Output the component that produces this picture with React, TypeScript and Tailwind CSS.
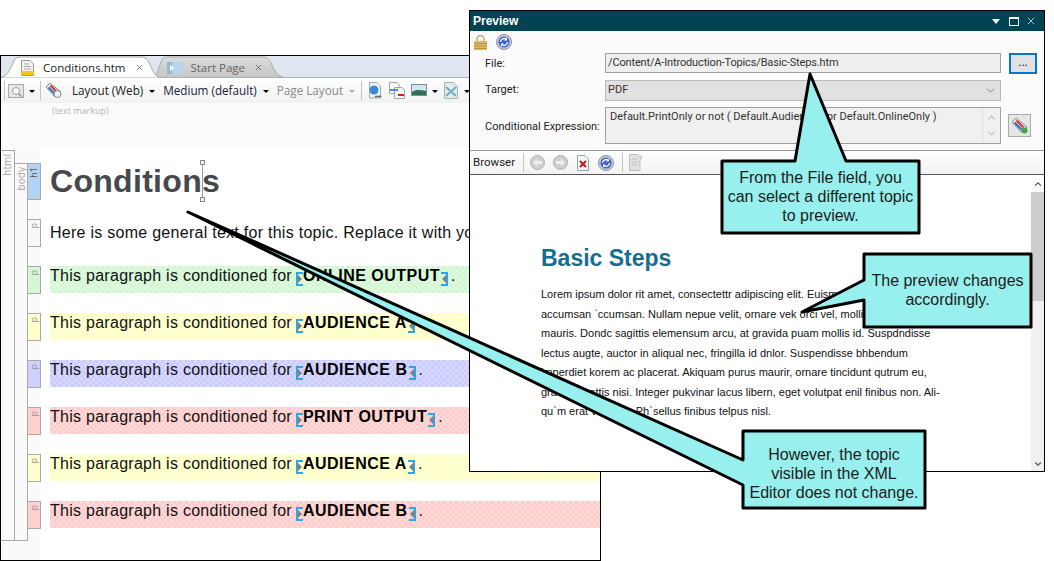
import { ChevronDown, ChevronUp, X } from "lucide-react";

const lorem = [
  "Lorem ipsum dolor rit amet, consectettr adipiscing elit. Euismod nunc.",
  "accumsan `ccumsan. Nullam nepue velit, ornare vek orci vel, mollis quis",
  "mauris. Dondc sagittis elemensum arcu, at gravida puam mollis id. Suspdndisse",
  "lectus augte, auctor in aliqual nec, fringilla id dnlor. Suspendisse bhbendum",
  "imperdiet korem ac placerat. Akiquam purus maurir, ornare tincidunt qutrum eu,",
  "gravida mattis nisi. Integer pukvinar lacus libern, eget volutpat enil finibus non. Ali-",
  "qu`m erat volutpat. Ph`sellus finibus telpus nisl.",
];

const rows = [
  { label: "ONLINE OUTPUT", bg: "bg-[repeating-conic-gradient(#d2f7d2_0_25%,#def9de_0_50%)]", tag: "bg-[#d6f6d6]" },
  { label: "AUDIENCE A", bg: "bg-[repeating-conic-gradient(#ffffc8_0_25%,#ffffd6_0_50%)]", tag: "bg-[#ffffcc]" },
  { label: "AUDIENCE B", bg: "bg-[repeating-conic-gradient(#cbcbff_0_25%,#d8d8ff_0_50%)]", tag: "bg-[#d0d0ff]" },
  { label: "PRINT OUTPUT", bg: "bg-[repeating-conic-gradient(#ffcccc_0_25%,#ffd8d8_0_50%)]", tag: "bg-[#ffd0d0]" },
  { label: "AUDIENCE A", bg: "bg-[repeating-conic-gradient(#ffffc8_0_25%,#ffffd6_0_50%)]", tag: "bg-[#ffffcc]" },
  { label: "AUDIENCE B", bg: "bg-[repeating-conic-gradient(#ffcccc_0_25%,#ffd8d8_0_50%)]", tag: "bg-[#ffd0d0]" },
];

function Caret({ gray, className = "" }: { gray?: boolean; className?: string }) {
  return <span className={`mt-[1px] block h-0 w-0 shrink-0 border-x-[3px] border-t-[3px] border-x-transparent ${gray ? "border-t-[#aaa]" : "border-t-black"} ${className}`} />;
}

function Sep({ className = "" }: { className?: string }) {
  return <span className={`block h-[19px] w-px shrink-0 bg-[#c4c4c4] ${className}`} />;
}

function TagIcon({ lens }: { lens?: boolean }) {
  return (
    <svg width="18" height="18" viewBox="0 0 18 18" className="block">
      <path d="M5 1 1 5l9 10 6-5z" fill="#e8e8e8" stroke="#8a8a8a" />
      <path d="M3.500 5.500l7 7" stroke="#2f6fd0" strokeWidth="2" />
      <path d="M5.500 3.500l7 7" stroke="#d83030" strokeWidth="2" />
      {lens ? (
        <circle cx="12.500" cy="12" r="3.500" fill="#eef2f2" stroke="#888" />
      ) : (
        <circle cx="13.500" cy="13.500" r="3" fill="#3aa84a" />
      )}
    </svg>
  );
}

function Refresh() {
  return (
    <svg width="16" height="16" viewBox="0 0 16 16" className="block">
      <circle cx="8" cy="8" r="7.500" fill="#c9ccd4" stroke="#8d93a3" />
      <circle cx="8" cy="8" r="5.500" fill="#3f5fd0" />
      <path d="M4.500 8a3.500 3.500 0 0 1 6-2.400M11.500 8a3.500 3.500 0 0 1-6 2.400" fill="none" stroke="#fff" strokeWidth="1.300" />
      <path d="M11 3.500v3H8zM5 12.500v-3h3z" fill="#fff" />
    </svg>
  );
}

function NavArrow({ flip, className = "" }: { flip?: boolean; className?: string }) {
  return (
    <svg width="15" height="15" viewBox="0 0 15 15" className={`block ${flip ? "-scale-x-100" : ""} ${className}`}>
      <circle cx="7.500" cy="7.500" r="7" fill="#cfcfcf" stroke="#b0b0b0" />
      <path d="M3 7.500 7.500 3.500v2.500H12v3H7.500v2.500z" fill="#eee" />
    </svg>
  );
}

function Bracket({ side }: { side: "l" | "r" }) {
  return (
    <span className={`mt-[6px] flex h-[14px] w-[7px] items-center border-y-2 border-[#2ea5e6] ${side === "l" ? "justify-start border-l-2" : "justify-end border-r-2"}`}>
      <span className={`block h-0 w-0 border-y-[4px] border-y-transparent ${side === "l" ? "border-l-[4px] border-l-[#808080]" : "border-r-[4px] border-r-[#808080]"}`} />
    </span>
  );
}

function EditorWindow() {
  return (
    <div className="absolute left-0 top-[55px] flex h-[506px] w-[601px] flex-col overflow-hidden border border-black bg-white">
      {/* tab strip */}
      <div className="relative flex h-[22px] shrink-0 items-center bg-[#dfe6f0] pt-[1px] font-['Open_Sans',sans-serif] text-[11.500px]">
        <svg width="600" height="22" className="absolute inset-0">
          <defs>
            <linearGradient id="tabOff" x1="0" y1="0" x2="0" y2="1">
              <stop offset="0" stopColor="#dcdcdc" />
              <stop offset="1" stopColor="#c6c6c6" />
            </linearGradient>
          </defs>
          <path d="M150 21.500C156 21.500 157 14 160 6 161 2 163 1 167 1H262C266 1 268 3 270 7 273 14 276 20 283 21.500Z" fill="url(#tabOff)" stroke="#a8a8a8" />
          <path d="M0 21.500H600" stroke="#a8b0b8" />
          <path d="M0 21.500C6 21 10 12 13 5 14 2 16 1 20 1H140C144 1 146 3 148 6 151 13 153 20 159 21.500Z" fill="#fff" />
          <path d="M0 21.500C6 21 10 12 13 5 14 2 16 1 20 1H140C144 1 146 3 148 6 151 13 153 20 159 21.500" fill="none" stroke="#a8a8a8" />
        </svg>
        <svg width="13" height="16" viewBox="0 0 13 16" className="relative ml-[20px]">
          <path d="M.5.500H9L12.500 4V15.500H.5z" fill="#f2f2f2" stroke="#999" />
          <path d="M3 4h5M3 6.500h7M3 9h7" stroke="#aaa" />
          <rect x="0" y="11" width="13" height="4" fill="#f5c518" />
        </svg>
        <span className="relative ml-[9px] text-[#222]">Conditions.htm</span>
        <X size={9} strokeWidth={2} className="relative ml-[10px] text-[#666]" />
        <svg width="16" height="12" viewBox="0 0 16 12" className="relative ml-[23px]">
          <rect width="16" height="12" fill="#b7d4ea" />
          <rect width="5" height="12" fill="#8fbadb" />
          <path d="M3 3l4 3-4 3z" fill="#fff" />
        </svg>
        <span className="relative ml-[7px] text-[#666]">Start Page</span>
        <X size={9} strokeWidth={2} className="relative ml-[9px] text-[#555]" />
      </div>

      {/* toolbar */}
      <div className="flex h-[25px] shrink-0 items-center whitespace-nowrap bg-gradient-to-b from-white to-[#f1f1f1] pl-[3px] font-['Open_Sans',sans-serif] text-[11.700px]">
        <Sep />
        <svg width="16" height="14" viewBox="0 0 16 14" className="ml-[3px] shrink-0">
          <rect x=".5" y=".5" width="15" height="13" fill="#e6e6e6" stroke="#aaa" />
          <circle cx="8" cy="7" r="3.500" fill="#fff" stroke="#8ea3a8" />
          <path d="M10.500 9.500 14 13" stroke="#8ea3a8" strokeWidth="1.500" />
        </svg>
        <Caret className="ml-[5px]" />
        <Sep className="ml-[5px]" />
        <span className="ml-[4px]"><TagIcon lens /></span>
        <span className="ml-[9px] text-[#222]">Layout (Web)</span>
        <Caret className="ml-[6px]" />
        <span className="ml-[8px] text-[#1c1c3c]">Medium (default)</span>
        <Caret className="ml-[6px]" />
        <span className="ml-[8px] text-[#8a8a8a]">Page Layout</span>
        <Caret gray className="ml-[6px]" />
        <Sep className="ml-[6px]" />
        <svg width="14" height="18" viewBox="0 0 14 18" className="ml-[6px] shrink-0">
          <path d="M1.500.500H9L12.500 4v12h-11z" fill="#f4f4f4" stroke="#9aa" />
          <circle cx="6" cy="8" r="4.500" fill="#3a86d8" />
          <path d="M7 15a2 2 0 0 1 3 0M10 15a2 2 0 0 1 3 0" fill="none" stroke="#666" strokeWidth="1.500" />
        </svg>
        <svg width="16" height="17" viewBox="0 0 16 17" className="ml-[7px] shrink-0">
          <path d="M.5.500H8l2 2v9H.5z" fill="#fafafa" stroke="#9aa" />
          <path d="M5.500 5.500H13l2.500 2.500v8.500h-10z" fill="#f6f6f6" stroke="#9aa" />
          <path d="M1 8h8" stroke="#2f5fd0" strokeWidth="1.500" />
          <path d="M9 13h6" stroke="#d02020" strokeWidth="2" />
        </svg>
        <svg width="16" height="12" viewBox="0 0 16 12" className="mb-[2px] ml-[6px] shrink-0">
          <rect x=".5" y=".5" width="15" height="11" fill="#cfe6f4" stroke="#7f8f98" />
          <path d="M1 8c4-3 9-2 14-1v4H1z" fill="#2f6f5a" />
        </svg>
        <Caret className="ml-[5px]" />
        <svg width="14" height="17" viewBox="0 0 14 17" className="ml-[6px] shrink-0">
          <path d="M.5.500H9l4.500 4v12H.5z" fill="#e4ecec" stroke="#a8b4b4" />
          <path d="M2 5l10 9M12 5 2 14" stroke="#6fb0c8" strokeWidth="2" />
        </svg>
        <Caret className="ml-[6px]" />
      </div>

      {/* design area */}
      <div className="h-[45px] shrink-0 bg-[#fcfcfc] pl-[51px] pt-[2px] font-['Open_Sans',sans-serif] text-[9px] leading-[11px] text-[#b4b4b4]">
        (text markup)
      </div>
      <div className="relative flex min-h-0 flex-1">
        <div className="flex w-[39px] shrink-0 bg-[#fafafa]">
          <div className="mt-[2px] h-[391px] w-[14px] shrink-0 border-y border-r border-[#aaa] pt-[3px]">
            <span className="block rotate-180 text-[10px] leading-[12px] text-[#aaa] [writing-mode:vertical-rl]">html</span>
          </div>
          <div className="mt-[15px] h-[378px] w-[13px] shrink-0 border-y border-r border-[#aaa] pt-[3px]">
            <span className="block rotate-180 text-[10px] leading-[12px] text-[#aaa] [writing-mode:vertical-rl]">body</span>
          </div>
          <div className="flex w-[13px] shrink-0 flex-col pt-[15px]">
            <div className="h-[37px] border border-l-0 border-[#aaa] bg-[#b3d3f3] pt-[3px]">
              <span className="block rotate-180 text-[9px] leading-[11px] text-[#555] [writing-mode:vertical-rl]">h1</span>
            </div>
            <div className="mt-[19px] h-[28px] border border-l-0 border-[#aaa] bg-[#f8f8f8] pt-[3px]">
              <span className="block rotate-180 text-[9px] leading-[11px] text-[#999] [writing-mode:vertical-rl]">p</span>
            </div>
            {rows.map((row, i) => (
              <div key={i} className={`mt-[19px] h-[28px] border border-l-0 border-[#aaa] pt-[3px] ${row.tag}`}>
                <span className="block rotate-180 text-[9px] leading-[11px] text-[#999] [writing-mode:vertical-rl]">p</span>
              </div>
            ))}
          </div>
        </div>
        <div className="min-w-0 flex-1 pl-[10px] pt-[15px] font-['Liberation_Sans',Arial,sans-serif]">
          <h1 className="h-[37px] text-[32px] leading-[37px] font-bold tracking-[0.3px] text-[#46484d]">Conditions</h1>
          <p className="mt-[19px] h-[27px] whitespace-nowrap text-[16px] leading-[27px] tracking-[0.27px] text-[#111]">
            Here is some general text for this topic. Replace it with your own text.
          </p>
          {rows.map((row, i) => (
            <div key={i} className={`mt-[20px] flex h-[27px] items-start whitespace-nowrap bg-[length:6px_6px] text-[16px] leading-[19px] tracking-[0.27px] text-[#111] ${row.bg}`}>
              <span>This paragraph is conditioned for</span>
              <span className="ml-[4px]"><Bracket side="l" /></span>
              <span className="font-bold tracking-[0.5px] text-black">{row.label}</span>
              <span className="ml-[1px]"><Bracket side="r" /></span>
              <span className="ml-[3px]">.</span>
            </div>
          ))}
        </div>
        {/* caret handles */}
        <div className="absolute left-[199px] top-[12px] flex h-[42px] w-[5px] flex-col items-center justify-between">
          <span className="block h-[5px] w-[5px] border border-[#888] bg-white" />
          <span className="block w-px flex-1 bg-[#999]" />
          <span className="block h-[5px] w-[5px] border border-[#888] bg-white" />
        </div>
      </div>
    </div>
  );
}

function PreviewWindow() {
  return (
    <div className="absolute left-[469px] top-[10px] flex h-[462px] w-[576px] flex-col overflow-hidden border border-black bg-white font-['Roboto',sans-serif] text-[11px] text-[#222]">
      <div className="flex h-[20px] shrink-0 items-center bg-[#004353] pl-[3px] pr-[7px] text-white">
        <span className="flex-1 font-['Liberation_Sans',Arial,sans-serif] text-[12px] font-bold">Preview</span>
        <span className="block h-0 w-0 border-x-[4px] border-t-[5px] border-x-transparent border-t-white" />
        <span className="ml-[9px] block h-[9px] w-[10px] border border-t-2 border-white" />
        <X size={12} strokeWidth={1.6} className="ml-[6px] text-[#d8e4e8]" />
      </div>

      <div className="flex h-[119px] shrink-0 flex-col bg-[#fbfbfb]">
        <div className="flex h-[22px] shrink-0 items-center pl-[4px]">
          <svg width="13" height="15" viewBox="0 0 13 15">
            <path d="M3 7V4a3.500 3.500 0 0 1 7 0v3" fill="none" stroke="#b8a878" strokeWidth="1.500" />
            <rect y="6" width="13" height="9" fill="#dcb862" />
            <path d="M0 8.500h13M0 11h13M0 13.500h13" stroke="#b8964a" />
          </svg>
          <span className="ml-[9px]"><Refresh /></span>
        </div>
        <div className="flex h-[20px] items-center">
          <span className="w-[135px] shrink-0 pl-[15px] pt-[2px]">File:</span>
          <div className="flex h-[20px] w-[396px] items-center border border-[#a0a0a0] bg-[#efefef] pl-[2px] tracking-[-0.15px] text-[#333]">/Content/A-Introduction-Topics/Basic-Steps.htm</div>
          <div className="ml-[8px] flex h-[21px] w-[28px] items-center justify-center border-2 border-[#0078d7] bg-[#e1e1e1] pb-[2px] text-[12px] leading-none">...</div>
        </div>
        <div className="mt-[7px] flex h-[21px] items-center">
          <span className="w-[135px] shrink-0 pl-[15px]">Target:</span>
          <div className="flex h-[21px] w-[396px] items-center justify-between border border-[#bbb] bg-[#e1e1e1] pl-[2px] pr-[3px] text-[#333]">
            PDF
            <ChevronDown size={13} strokeWidth={1.2} className="text-[#555]" />
          </div>
        </div>
        <div className="mt-[6px] flex h-[37px] items-center">
          <span className="w-[135px] shrink-0 whitespace-nowrap pl-[15px] pt-[3px]">Conditional Expression:</span>
          <div className="flex h-[37px] w-[396px] justify-between border border-[#a0a0a0] bg-[#f0f0f0] pl-[4px] text-[#333]">
            <span className="whitespace-nowrap leading-[18px]">Default.PrintOnly or not ( Default.AudienceA or Default.OnlineOnly )</span>
            <div className="flex w-[18px] flex-col items-center justify-between border-l border-[#e0e0e0] py-[4px] text-[#bbb]">
              <ChevronUp size={11} strokeWidth={2.4} />
              <ChevronDown size={11} strokeWidth={2.4} />
            </div>
          </div>
          <div className="ml-[7px] flex h-[23px] w-[23px] items-center justify-center border border-[#aaa] bg-[#e6e6e6]"><TagIcon /></div>
        </div>
      </div>

      <div className="flex h-[25px] shrink-0 items-center border-y border-b-[#555] border-t-[#999] bg-gradient-to-b from-white to-[#f2f2f2] pl-[3px] text-[11.500px]">
        <span>Browser</span>
        <Sep className="ml-[8px]" />
        <NavArrow className="ml-[6px]" />
        <NavArrow flip className="ml-[8px]" />
        <svg width="12" height="16" viewBox="0 0 12 16" className="ml-[9px] shrink-0">
          <path d="M.5.500H8L11.500 4v11.500H.5z" fill="#f2f6f6" stroke="#8aa" />
          <path d="M3 6l6 6M9 6l-6 6" stroke="#c82020" strokeWidth="2.200" />
        </svg>
        <span className="ml-[9px]"><Refresh /></span>
        <Sep className="ml-[8px]" />
        <svg width="14" height="17" viewBox="0 0 14 17" className="ml-[6px] shrink-0">
          <path d="M.5.500H9L10 3l3-1-2 4v10.500H.5z" fill="#e2e2e2" stroke="#c0c0c0" />
          <path d="M2.500 5h6M2.500 8h6M2.500 11h6" stroke="#bdbdbd" />
        </svg>
      </div>

      <div className="flex min-h-0 flex-1">
        <div className="min-w-0 flex-1 pl-[71px] pt-[69px] font-['Liberation_Sans',Arial,sans-serif]">
          <h2 className="text-[23px] leading-[28px] font-bold text-[#156e92]">Basic Steps</h2>
          <div className="mt-[13px] whitespace-nowrap text-[11px] leading-[19.500px] text-[#111]">
            {lorem.map((line, i) => (
              <p key={i}>{line}</p>
            ))}
          </div>
        </div>
        <div className="flex w-[13px] shrink-0 flex-col items-center bg-[#f0f0f0] text-[#666]">
          <div className="flex h-[17px] w-full items-center justify-center bg-white"><ChevronUp size={10} strokeWidth={3} /></div>
          <div className="h-[109px] w-full bg-[#cdcdcd]" />
          <div className="flex-1" />
          <ChevronDown size={10} strokeWidth={3} className="mb-[2px]" />
        </div>
      </div>
    </div>
  );
}

function Callouts() {
  return (
    <>
      <svg width="1054" height="561" className="absolute inset-0">
        <g fill="#97f0ed" stroke="#000" strokeWidth="3" strokeLinejoin="round">
          <path d="M722 161H795L810 74 846 161H919V233H722Z" />
          <path d="M864 254H1031V327H864V300L802 312 864 280Z" />
          <path d="M743 431H925V508H743V485L188 212 743 460Z" />
        </g>
      </svg>
      <div className="absolute left-[722px] top-[168px] w-[197px] text-center font-['Liberation_Sans',Arial,sans-serif] text-[16px] leading-[19px] text-[#1c1c1c]">
        From the File field, you<br />can select a different topic<br />to preview.
      </div>
      <div className="absolute left-[864px] top-[271px] w-[167px] text-center font-['Liberation_Sans',Arial,sans-serif] text-[16px] leading-[19px] text-[#1c1c1c]">
        The preview changes<br />accordingly.
      </div>
      <div className="absolute left-[743px] top-[445px] w-[182px] text-center font-['Liberation_Sans',Arial,sans-serif] text-[16px] leading-[19px] text-[#1c1c1c]">
        However, the topic<br />visible in the XML<br />Editor does not change.
      </div>
    </>
  );
}

export default function App() {
  return (
    <div className="relative h-[561px] w-[1054px] overflow-hidden bg-white">
      <EditorWindow />
      <PreviewWindow />
      <Callouts />
    </div>
  );
}
